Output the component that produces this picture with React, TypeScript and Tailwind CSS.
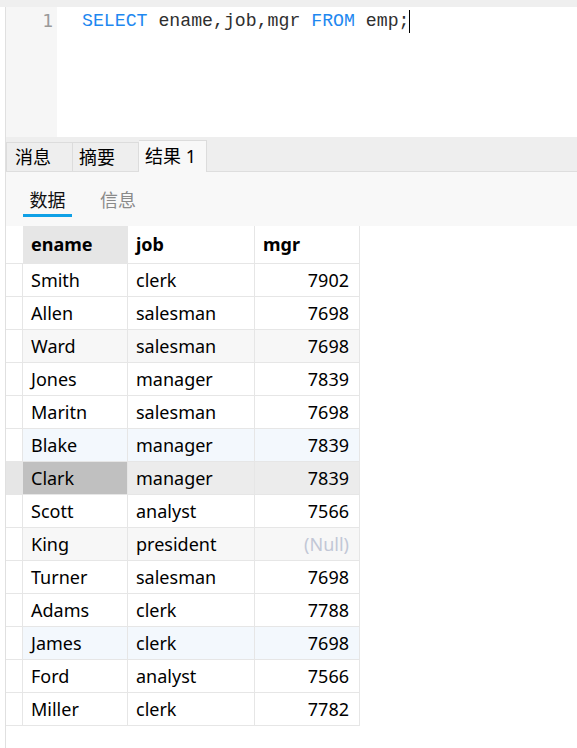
import React from "react";

type Row = { ename: string; job: string; mgr: string | null; tone?: "gray" | "blue" | "sel" };

const rows: Row[] = [
  { ename: "Smith", job: "clerk", mgr: "7902" },
  { ename: "Allen", job: "salesman", mgr: "7698" },
  { ename: "Ward", job: "salesman", mgr: "7698", tone: "gray" },
  { ename: "Jones", job: "manager", mgr: "7839" },
  { ename: "Maritn", job: "salesman", mgr: "7698" },
  { ename: "Blake", job: "manager", mgr: "7839", tone: "blue" },
  { ename: "Clark", job: "manager", mgr: "7839", tone: "sel" },
  { ename: "Scott", job: "analyst", mgr: "7566" },
  { ename: "King", job: "president", mgr: null, tone: "gray" },
  { ename: "Turner", job: "salesman", mgr: "7698" },
  { ename: "Adams", job: "clerk", mgr: "7788" },
  { ename: "James", job: "clerk", mgr: "7698", tone: "blue" },
  { ename: "Ford", job: "analyst", mgr: "7566" },
  { ename: "Miller", job: "clerk", mgr: "7782" },
];

const ui = { fontFamily: '"Noto Sans", "Noto Sans CJK SC", sans-serif' };

export default function App() {
  return (
    <div className="w-[577px] h-[748px] bg-white overflow-hidden text-[18px] text-black" style={ui}>
      {/* top strip */}
      <div className="h-[7px] bg-[#efefef]" />

      <div className="ml-[5px] border-l border-[#e0e0e0] h-[741px] flex flex-col">
        {/* editor */}
        <div className="h-[130px] flex">
          <div className="w-[51px] bg-[#f6f6f6] pr-[4px] pt-[2px] text-right text-[18px] leading-[24px] text-[#9a9a9a] font-['DejaVu_Sans_Mono',monospace]">
            1
          </div>
          <div className="flex-1 pl-[25px] pt-[2px] text-[18.2px] leading-[24px] text-[#2f2f2f] font-['Liberation_Mono',monospace] whitespace-pre flex items-start">
            <span className="text-[#1e88f0]">SELECT</span>
            <span> ename,job,mgr </span>
            <span className="text-[#1e88f0]">FROM</span>
            <span> emp;</span>
            <span className="w-px h-[23px] bg-black mt-px" />
          </div>
        </div>

        {/* result tabs */}
        <div className="h-[35px] bg-[#eeeeee] border-b border-[#dedede] flex items-end">
          <div className="w-[67px] h-[29px] border border-b-0 border-[#dcdcdc] pl-[8px] leading-[29px]">消息</div>
          <div className="w-[66px] h-[29px] border border-l-0 border-b-0 border-[#dcdcdc] pl-[6px] leading-[29px]">摘要</div>
          <div className="w-[68px] h-[32px] -mb-px bg-[#f8f8f8] border border-l-0 border-b-0 border-[#dcdcdc] pl-[6px] leading-[31px]">结果 1</div>
        </div>

        {/* sub tabs */}
        <div className="h-[54px] bg-[#f8f8f8] flex items-end pl-[17px] gap-[28px]">
          <div className="flex flex-col items-center w-[49px]">
            <span className="leading-[24px] text-[#111]">数据</span>
            <span className="mt-[2px] mb-[9px] h-[3px] w-full bg-[#0fa0e6]" />
          </div>
          <div className="leading-[24px] text-[#8a8a8a] mb-[14px]">信息</div>
        </div>

        {/* grid */}
        <div className="flex flex-col">
          <div className="flex h-[38px]">
            <div className="w-[17px] border-b border-[#e6e6e6]" />
            <div className="w-[105px] bg-[#e6e6e6] border-b border-r border-[#e6e6e6] pl-[8px] flex items-center font-bold">ename</div>
            <div className="w-[127px] border-b border-r border-[#e6e6e6] pl-[8px] flex items-center font-bold">job</div>
            <div className="w-[105px] border-b border-r border-[#e6e6e6] pl-[8px] flex items-center font-bold">mgr</div>
          </div>
          {rows.map((r) => {
            const rowBg =
              r.tone === "gray" ? "bg-[#f7f7f7]" : r.tone === "blue" ? "bg-[#f3f8fd]" : r.tone === "sel" ? "bg-[#ececec]" : "bg-white";
            return (
              <div key={r.ename} className="flex h-[33px]">
                <div className={`w-[17px] border-b border-r border-[#e6e6e6] ${r.tone === "sel" ? "bg-[#e6e6e6]" : "bg-white"}`} />
                <div className={`w-[105px] border-b border-r border-[#e6e6e6] pl-[8px] flex items-center ${r.tone === "sel" ? "bg-[#c0c0c0]" : rowBg}`}>
                  {r.ename}
                </div>
                <div className={`w-[127px] border-b border-r border-[#e6e6e6] pl-[8px] flex items-center ${rowBg}`}>{r.job}</div>
                <div className={`w-[105px] border-b border-r border-[#e6e6e6] pr-[10px] flex items-center justify-end ${rowBg}`}>
                  {r.mgr ?? <span className="text-[#c2c7d6]">(Null)</span>}
                </div>
              </div>
            );
          })}
        </div>
      </div>
    </div>
  );
}
